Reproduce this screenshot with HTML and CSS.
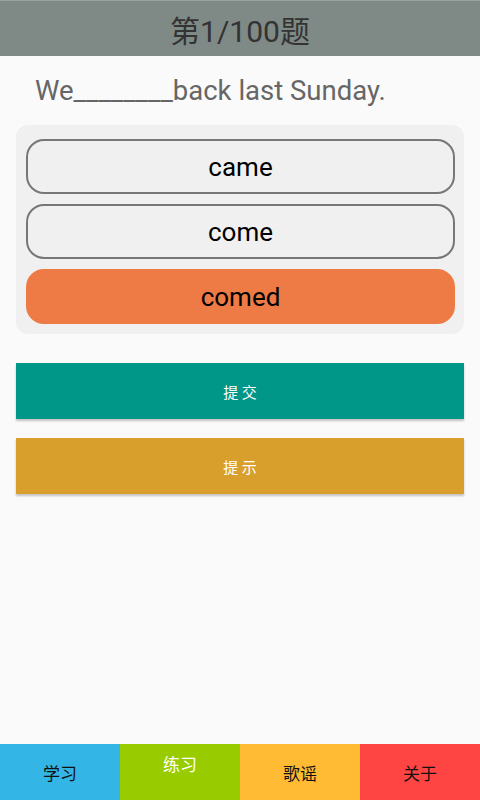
FILE: index.html
```html
<!DOCTYPE html>
<html lang="zh">
<head>
<meta charset="utf-8">
<title>练习</title>
<link rel="stylesheet" href="styles.css">
</head>
<body>
<div class="app">
  <header class="topbar">第1/100题</header>
  <main class="content">
    <p class="question">We________back last Sunday.</p>
    <div class="options">
      <div class="option">came</div>
      <div class="option">come</div>
      <div class="option selected">comed</div>
    </div>
    <button class="action submit">提 交</button>
    <button class="action hint">提 示</button>
  </main>
  <nav class="tabs">
    <div class="tab tab-study">学习</div>
    <div class="tab tab-practice">练习</div>
    <div class="tab tab-song">歌谣</div>
    <div class="tab tab-about">关于</div>
  </nav>
</div>
</body>
</html>
```
FILE: styles.css
```css
* { box-sizing: border-box; }
html, body { margin: 0; padding: 0; }
body {
  background: #fafafa;
  font-family: Roboto, "Noto Sans CJK SC", sans-serif;
}
.app {
  width: 480px;
  height: 800px;
  display: flex;
  flex-direction: column;
}
.topbar {
  height: 56px;
  background: #7f8a86;
  border-top: 1px solid #9aa39f;
  color: #333;
  font-size: 30px;
  display: flex;
  align-items: center;
  justify-content: center;
}
.content {
  flex: 1;
  padding: 0 16px;
}
.question {
  margin: 17px 0 0 19px;
  font-size: 27.5px;
  line-height: 36px;
  color: #666;
}
.options {
  margin-top: 16px;
  background: #f0f0f0;
  border-radius: 12px;
  padding: 14px 9px 10px 10px;
  display: flex;
  flex-direction: column;
  gap: 10px;
}
.option {
  height: 55px;
  border: 2px solid #777;
  border-radius: 18px;
  display: flex;
  align-items: center;
  justify-content: center;
  font-size: 26px;
  color: #000;
}
.option.selected {
  background: #ee7a45;
  border-color: #ee7a45;
}
.action {
  display: block;
  width: 100%;
  height: 56px;
  border: none;
  border-radius: 0;
  color: #fff;
  font-family: Roboto, "Noto Sans CJK SC", sans-serif;
  font-size: 15px;
  box-shadow: 0 2px 2px rgba(0,0,0,0.22);
  padding: 0;
}
.submit { margin-top: 29px; background: #009688; }
.hint { margin-top: 19px; background: #d99f2c; }
.tabs {
  height: 56px;
  display: grid;
  grid-template-columns: repeat(4, 1fr);
}
.tab {
  display: flex;
  align-items: center;
  justify-content: center;
  font-size: 17px;
  color: #111;
}
.tab-study { background: #33b5e5; }
.tab-practice { background: #99cc00; color: #fff; align-items: flex-start; padding-top: 7px; }
.tab-song { background: #ffbb33; }
.tab-about { background: #ff4444; }
```
